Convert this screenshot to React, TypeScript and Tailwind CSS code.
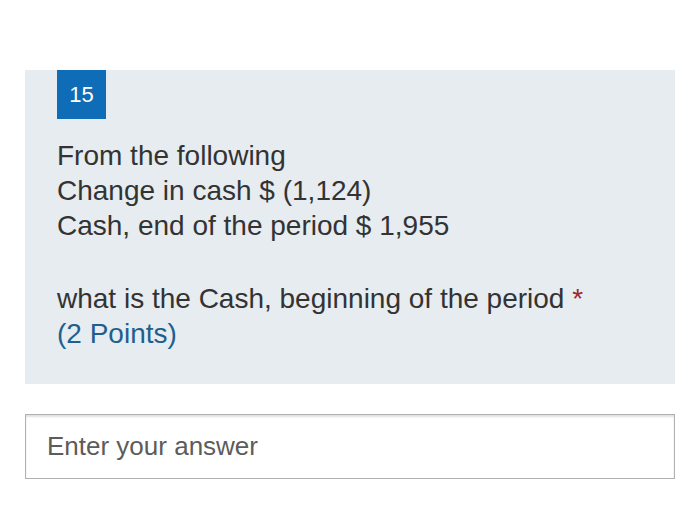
export default function App() {
  return (
    <div className="min-h-[517px] w-[700px] bg-white pt-[70px] px-[25px]" style={{ fontFamily: '"Liberation Sans", Arial, sans-serif' }}>
      <div className="bg-[#e6ecf0] pl-[32px] pr-6 pb-[33px]">
        <div className="w-[49px] h-[49px] bg-[#0f6cb6] text-white text-[22px] flex items-center justify-center">15</div>
        <div className="mt-[19px] text-[28px] leading-[35px] text-[#333]">
          <p>From the following</p>
          <p>Change in cash $ (1,124)</p>
          <p>Cash, end of the period $ 1,955</p>
        </div>
        <div className="mt-[38px] text-[28px] leading-[35px] text-[#333]">
          <p>
            what is the Cash, beginning of the period <span className="text-[#a4262c]">*</span>
          </p>
          <p className="text-[#1f5f8f]">(2 Points)</p>
        </div>
      </div>
      <div className="mt-[30px] h-[65px] border border-[#b0b0b0] shadow-[inset_0_2px_2px_rgba(0,0,0,0.12)] flex items-center px-[21px]">
        <input
          placeholder="Enter your answer"
          className="w-full bg-transparent outline-none text-[26px] text-[#555] placeholder:text-[#5c5c5c]"
          style={{ fontFamily: '"Liberation Sans", Arial, sans-serif' }}
        />
      </div>
    </div>
  );
}
